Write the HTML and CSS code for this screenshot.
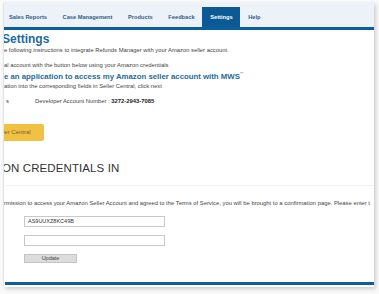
FILE: index.html
```html
<!DOCTYPE html>
<html>
<head>
<meta charset="utf-8">
<link rel="stylesheet" href="styles.css">
</head>
<body>
<div class="card">
  <div class="nav">
    <span class="tab first">Sales Reports</span>
    <span class="tab">Case Management</span>
    <span class="tab">Products</span>
    <span class="tab">Feedback</span>
    <span class="tab active">Settings</span>
    <span class="tab">Help</span>
  </div>
  <div class="content">
    <h1 class="title">Settings</h1>
    <p class="txt l1">e following instructions to integrate Refunds Manager with your Amazon seller account.</p>
    <p class="txt l2">al account with the button below using your Amazon credentials</p>
    <h2 class="sub">e an application to access my Amazon seller account with MWS<sup>™</sup></h2>
    <p class="txt">ation into the corresponding fields in Seller Central, click next</p>
    <div class="dev"><span class="devl">s</span><span>Developer Account Number : <b>3272-2943-7085</b></span></div>
    <div class="yb">ler Central</div>
    <h2 class="big">ON CREDENTIALS IN</h2>
    <div class="rule"></div>
    <p class="txt perm">rmission to access your Amazon Seller Account and agreed to the Terms of Service, you will be brought to a confirmation page. Please enter t</p>
    <div class="form">
      <div class="inp">AS9UUXZ8KC49B</div>
      <div class="inp"></div>
      <div class="btn">Update</div>
    </div>
  </div>
  <div class="foot"></div>
</div>
</body>
</html>
```
FILE: styles.css
```css
html, body { margin: 0; padding: 0; background: #fafafa; }
body { font-family: "Liberation Sans", Arial, sans-serif; color: #333; width: 379px; height: 294px; overflow: hidden; }
.card {
  margin: 2px 0 0 3px; width: 371px; height: 285px; background: #fff;
  border-left: 1px solid #e4e4e4; box-sizing: border-box;
  box-shadow: 2px 2px 4px rgba(0,0,0,0.18); overflow: hidden;
  display: flex; flex-direction: column;
}
.nav {
  height: 25px; background: #edf2f8; border-bottom: 3px solid #0d5c9c;
  display: flex; align-items: flex-end; padding-left: 0; flex-shrink: 0;
}
.tab {
  font-size: 5.7px; font-weight: bold; color: #2d5f8e; padding: 0 7.8px; height: 20px;
  line-height: 20px;
}
.tab.first { padding-left: 5px; }
.tab.active { background: #0b5a95; color: #fff; padding: 0 7.8px; }
.content { flex: 1; padding-left: 0; }
.title { margin: 3px 0 0 -2px; font-size: 12px; color: #1e6b9e; font-weight: bold; line-height: 12px; }
.txt { margin: 0; font-size: 5.85px; line-height: 9px; color: #444; white-space: nowrap; }
.l1 { margin-top: 1px; }
.l2 { margin-top: 6px; }
.sub { margin: -1px 0 1px; font-size: 7.8px; color: #1e6b9e; font-weight: bold; line-height: 9px; white-space: nowrap; }
.sub sup { font-size: 4px; color: #999; vertical-align: 4px; }
.dev { display: flex; font-size: 5.85px; color: #444; margin-top: 6px; line-height: 9px; white-space: nowrap; }
.devl { width: 29px; padding-left: 2px; }
.dev b { color: #222; }
.yb {
  margin-top: 18px; margin-left: -1px; width: 41px; height: 17px; background: #f1c143; border-radius: 2px;
  font-size: 6px; color: #7a6030; line-height: 17px;
}
.big { margin: 21px 0 0 -2px; font-size: 11.5px; font-weight: normal; color: #333; line-height: 12px; letter-spacing: 0.1px; }
.rule { margin-top: 11px; border-top: 1px solid #f2f2f2; }
.perm { margin-top: 13px; }
.form { padding-left: 20px; margin-top: 8px; display: flex; flex-direction: column; }
.inp {
  width: 141px; height: 11px; border: 1px solid #c8c8c8; box-sizing: border-box;
  font-size: 5.5px; line-height: 9px; padding-left: 3px; color: #333; margin-bottom: 8px;
}
.btn {
  width: 53px; height: 9px; background: #dcdcdc; border: 1px solid #c4c4c4; box-sizing: border-box;
  font-size: 5.5px; line-height: 7px; text-align: center; color: #444; margin-top: 0;
}
.foot { height: 3px; background: #0d5c9c; margin: 0 0 2px 1px; flex-shrink: 0; }
```
